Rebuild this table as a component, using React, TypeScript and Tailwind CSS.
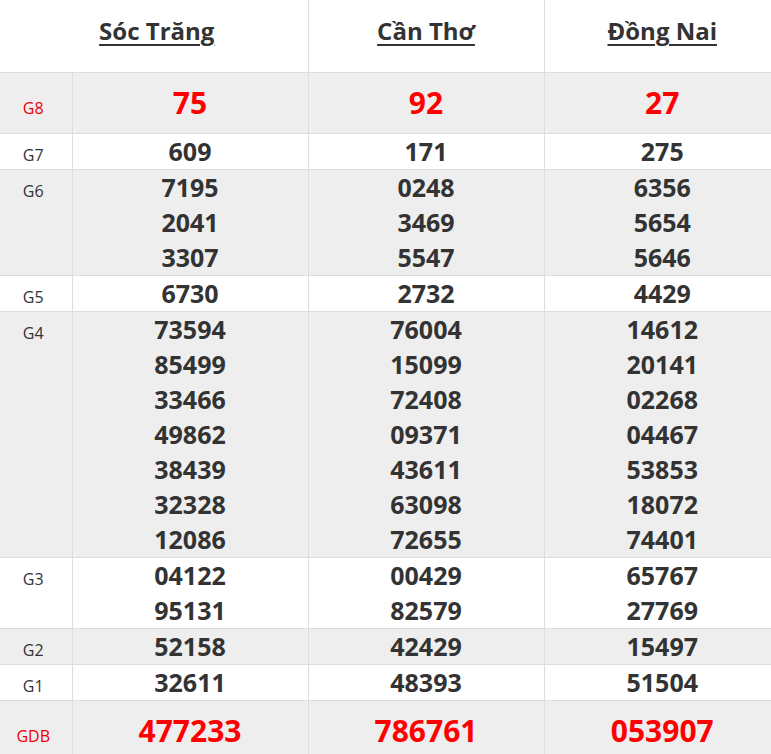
import React from 'react';

type Prize = { label: string; values: string[][]; big?: boolean; shade?: boolean };

const provinces = ['Sóc Trăng', 'Cần Thơ', 'Đồng Nai'];

const prizes: Prize[] = [
  { label: 'G8', big: true, shade: true, values: [['75'], ['92'], ['27']] },
  { label: 'G7', values: [['609'], ['171'], ['275']] },
  {
    label: 'G6',
    shade: true,
    values: [
      ['7195', '2041', '3307'],
      ['0248', '3469', '5547'],
      ['6356', '5654', '5646'],
    ],
  },
  { label: 'G5', values: [['6730'], ['2732'], ['4429']] },
  {
    label: 'G4',
    shade: true,
    values: [
      ['73594', '85499', '33466', '49862', '38439', '32328', '12086'],
      ['76004', '15099', '72408', '09371', '43611', '63098', '72655'],
      ['14612', '20141', '02268', '04467', '53853', '18072', '74401'],
    ],
  },
  {
    label: 'G3',
    values: [
      ['04122', '95131'],
      ['00429', '82579'],
      ['65767', '27769'],
    ],
  },
  { label: 'G2', shade: true, values: [['52158'], ['42429'], ['15497']] },
  { label: 'G1', values: [['32611'], ['48393'], ['51504']] },
  { label: 'GDB', big: true, shade: true, values: [['477233'], ['786761'], ['053907']] },
];

const App: React.FC = () => {
  return (
    <div className="w-full overflow-hidden bg-white font-['Open_Sans',sans-serif] text-[#333]">
      <table className="w-[780px] table-fixed border-collapse">
        <colgroup>
          <col className="w-[72px]" />
          <col className="w-[236px]" />
          <col className="w-[236px]" />
          <col className="w-[236px]" />
        </colgroup>
        <thead>
          <tr className="h-[72px] border-b border-[#ddd]">
            {provinces.map((p, i) => (
              <th
                key={p}
                colSpan={i === 0 ? 2 : 1}
                className={`pt-[16px] align-top text-[24px] font-bold leading-[30px] ${i === 0 ? 'pl-[6px]' : ''} ${i < 2 ? 'border-r border-[#ddd]' : ''}`}
              >
                <span className="underline decoration-[2px] underline-offset-[4px]">{p}</span>
              </th>
            ))}
          </tr>
        </thead>
        <tbody>
          {prizes.map((row) => (
            <tr key={row.label} className={`border-b border-[#ddd] ${row.shade ? 'bg-[#eee]' : 'bg-white'}`}>
              <td
                className={`border-r border-[#ddd] pr-[5px] text-center align-baseline text-[16px] leading-[20px] ${row.big ? 'text-[#e00]' : 'text-[#333]'}`}
              >
                {row.label}
              </td>
              {row.values.map((vals, i) => (
                <td key={i} className={`text-center align-baseline font-bold ${i < 2 ? 'border-r border-[#ddd]' : ''}`}>
                  {row.big ? (
                    <div className="py-[10px] text-[30px] leading-[40px] text-[#f00]">{vals[0]}</div>
                  ) : (
                    vals.map((v) => (
                      <div key={v} className="text-[25px] leading-[35px]">
                        {v}
                      </div>
                    ))
                  )}
                </td>
              ))}
            </tr>
          ))}
        </tbody>
      </table>
    </div>
  );
};

export default App;
